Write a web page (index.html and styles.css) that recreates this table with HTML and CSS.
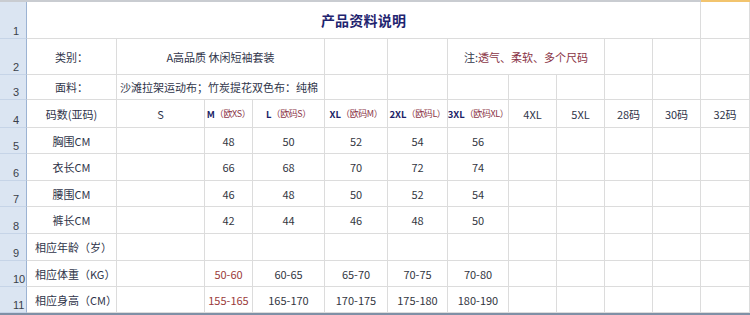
FILE: index.html
```html
<!DOCTYPE html>
<html lang="zh-CN">
<head>
<meta charset="utf-8">
<title>产品资料说明</title>
<link rel="stylesheet" href="styles.css">
</head>
<body>
<div class="topbar"><div class="tb-main"></div><div class="tb-sel"></div></div>
<div class="sheet">
  <div class="rh">1</div><div class="c title span11">产品资料说明</div><div class="c"></div>

  <div class="rh">2</div><div class="c lbl">类别：</div><div class="c lbl span3">A高品质 休闲短袖套装</div><div class="c"></div><div class="c"></div><div class="c lbl span3">注:<span class="maroon">透气、柔软、多个尺码</span></div><div class="c"></div><div class="c"></div><div class="c"></div>

  <div class="rh">3</div><div class="c lbl">面料：</div><div class="c lbl span3 left">沙滩拉架运动布；竹炭提花双色布：纯棉</div><div class="c"></div><div class="c"></div><div class="c"></div><div class="c"></div><div class="c"></div><div class="c"></div><div class="c"></div><div class="c"></div>

  <div class="rh">4</div><div class="c lbl">码数(亚码)</div><div class="c lbl">S</div><div class="c hd"><b>M</b><span class="maroon">（欧XS）</span></div><div class="c hd"><b>L</b><span class="maroon">（欧码S）</span></div><div class="c hd"><b>XL</b><span class="maroon">（欧码M）</span></div><div class="c hd"><b>2XL</b><span class="maroon">（欧码L）</span></div><div class="c hd"><b>3XL</b><span class="maroon">（欧码XL）</span></div><div class="c lbl">4XL</div><div class="c lbl">5XL</div><div class="c lbl">28码</div><div class="c lbl">30码</div><div class="c lbl">32码</div>

  <div class="rh">5</div><div class="c lbl">胸围CM</div><div class="c"></div><div class="c num">48</div><div class="c num">50</div><div class="c num">52</div><div class="c num">54</div><div class="c num">56</div><div class="c"></div><div class="c"></div><div class="c"></div><div class="c"></div><div class="c"></div>

  <div class="rh">6</div><div class="c lbl">衣长CM</div><div class="c"></div><div class="c num">66</div><div class="c num">68</div><div class="c num">70</div><div class="c num">72</div><div class="c num">74</div><div class="c"></div><div class="c"></div><div class="c"></div><div class="c"></div><div class="c"></div>

  <div class="rh">7</div><div class="c lbl">腰围CM</div><div class="c"></div><div class="c num">46</div><div class="c num">48</div><div class="c num">50</div><div class="c num">52</div><div class="c num">54</div><div class="c"></div><div class="c"></div><div class="c"></div><div class="c"></div><div class="c"></div>

  <div class="rh">8</div><div class="c lbl">裤长CM</div><div class="c"></div><div class="c num">42</div><div class="c num">44</div><div class="c num">46</div><div class="c num">48</div><div class="c num">50</div><div class="c"></div><div class="c"></div><div class="c"></div><div class="c"></div><div class="c"></div>

  <div class="rh">9</div><div class="c lbl left pad">相应年龄（岁）</div><div class="c"></div><div class="c"></div><div class="c"></div><div class="c"></div><div class="c"></div><div class="c"></div><div class="c"></div><div class="c"></div><div class="c"></div><div class="c"></div><div class="c"></div>

  <div class="rh">10</div><div class="c lbl left pad">相应体重（KG）</div><div class="c"></div><div class="c num red">50-60</div><div class="c num">60-65</div><div class="c num">65-70</div><div class="c num">70-75</div><div class="c num">70-80</div><div class="c"></div><div class="c"></div><div class="c"></div><div class="c"></div><div class="c"></div>

  <div class="rh">11</div><div class="c lbl left pad">相应身高（CM）</div><div class="c"></div><div class="c num red">155-165</div><div class="c num">165-170</div><div class="c num">170-175</div><div class="c num">175-180</div><div class="c num">180-190</div><div class="c"></div><div class="c"></div><div class="c"></div><div class="c"></div><div class="c"></div>
</div>
<div class="bottombar"></div>
</body>
</html>
```

FILE: styles.css
```css
html, body {
  margin: 0;
  padding: 0;
  background: #ffffff;
}
body {
  width: 750px;
  height: 315px;
  overflow: hidden;
  font-family: "Noto Sans CJK SC", sans-serif;
}
.topbar {
  display: flex;
  height: 2px;
}
.tb-main {
  flex: 1;
  background: #c9ccd1;
}
.tb-sel {
  width: 49px;
  background: #f2c46e;
}
.sheet {
  display: grid;
  grid-template-columns: 27px 90px 88px 48px 72px 63px 60px 61px 48px 48px 48px 48px 49px;
  grid-template-rows: 37px 36px 25px 28px 26px 27px 26px 27px 27px 26px 26px;
}
.rh {
  box-sizing: border-box;
  background: #dbe5f2;
  border-right: 1px solid #9cb3d3;
  border-bottom: 1px solid #c6d4e7;
  display: flex;
  align-items: flex-end;
  padding-left: 13px;
  padding-bottom: 0;
  font-family: "Liberation Sans", sans-serif;
  font-size: 11px;
  line-height: 13px;
  color: #3a3f4a;
}
.c {
  box-sizing: border-box;
  border-right: 1px solid #dcdcdc;
  border-bottom: 1px solid #dcdcdc;
  display: flex;
  align-items: center;
  justify-content: center;
  white-space: nowrap;
  overflow: hidden;
  font-size: 11px;
  color: #30354a;
}
.span11 { grid-column: span 11; }
.span3 { grid-column: span 3; }
.title {
  font-size: 14px;
  font-weight: 700;
  color: #1f2570;
  letter-spacing: 0.2px;
}
.lbl {
  color: #30354a;
}
.left {
  justify-content: flex-start;
  padding-left: 3px;
}
.pad {
  padding-left: 8px;
}
.maroon {
  color: #8a3446;
}
.hd {
  font-size: 9px;
  letter-spacing: -0.4px;
}
.hd b {
  color: #1d1f68;
  font-weight: 700;
  font-size: 9.5px;
  letter-spacing: 0;
}
.num {
  font-size: 11px;
  color: #33363f;
}
.red {
  color: #9a3a3a;
}
.bottombar {
  height: 2px;
  background: #7f90a6;
}
```
